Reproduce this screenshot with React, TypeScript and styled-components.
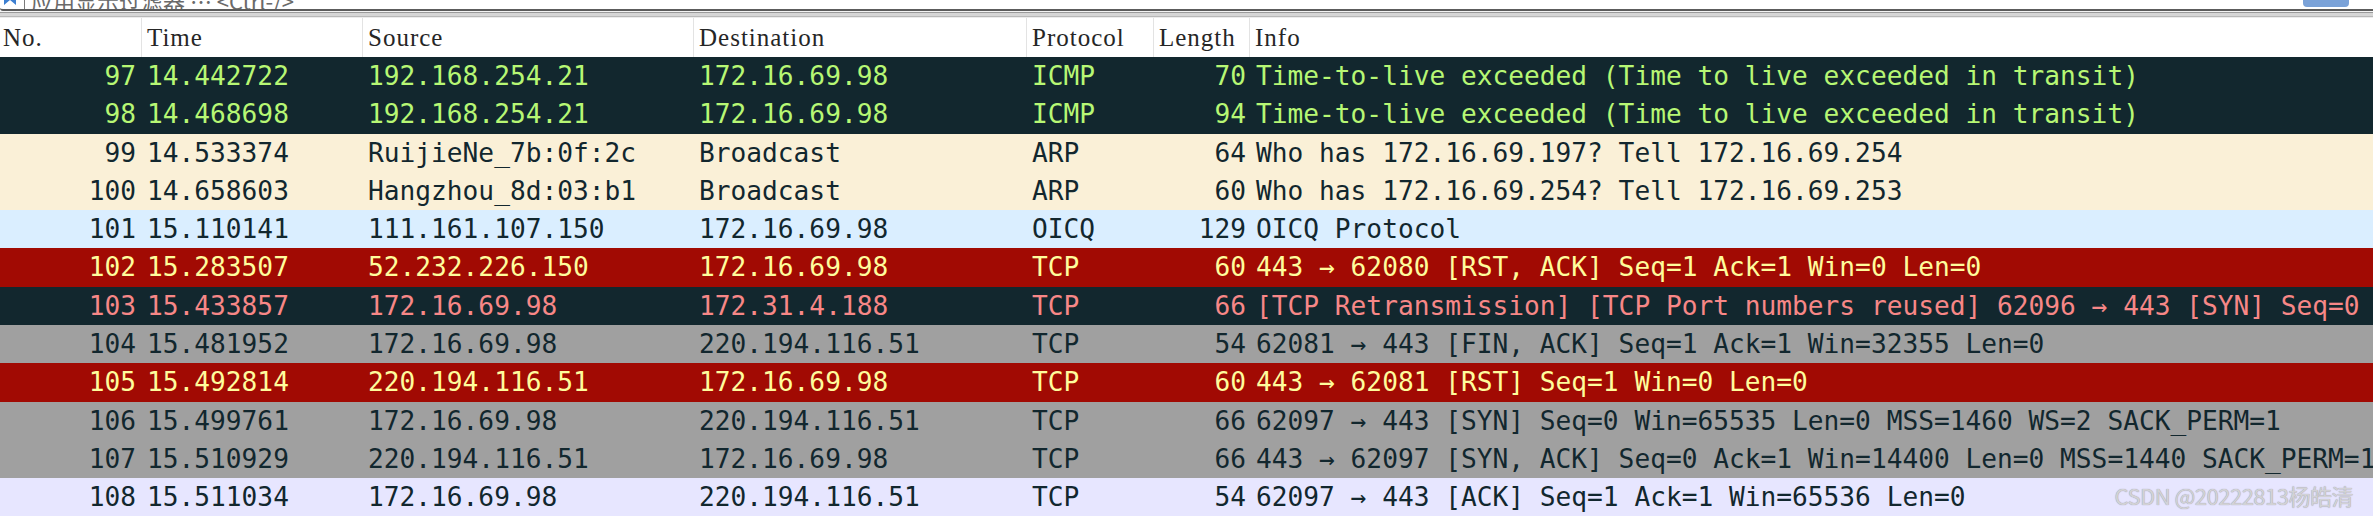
import React from "react";
import styled, { createGlobalStyle, css } from "styled-components";

const GlobalStyle = createGlobalStyle`
  html, body {
    margin: 0;
    padding: 0;
    background: #ffffff;
    overflow: hidden;
  }
  #root {
    width: 2373px;
    height: 516px;
  }
`;

const columns = css`
  display: grid;
  grid-template-columns: 141px 221px 331px 333px 127px 96px minmax(0, 1fr);
`;

const Window = styled.div`
  position: relative;
  width: 2373px;
  height: 516px;
  overflow: hidden;
  background: #ffffff;
  display: flex;
  flex-direction: column;
`;

const FilterBar = styled.div`
  height: 9px;
  flex: none;
  display: flex;
  align-items: flex-end;
  overflow: hidden;
  border-bottom: 2px solid #5c5c5c;
  border-bottom-left-radius: 3px;
  background: #ffffff;
`;

const FilterIcon = styled.div`
  width: 18px;
  height: 26px;
  flex: none;
  margin-left: 2px;
  display: flex;
  align-items: flex-end;
`;

const FilterDivider = styled.div`
  width: 1px;
  height: 26px;
  background: #7a7a7a;
  margin: 0 6px 0 4px;
  flex: none;
`;

const FilterText = styled.div`
  font-family: "Noto Sans CJK SC", sans-serif;
  font-size: 22px;
  line-height: 26px;
  height: 22px;
  color: #6a6a6a;
  white-space: nowrap;
  flex: 1;
`;

const FilterButton = styled.div`
  width: 46px;
  height: 24px;
  margin-right: 24px;
  margin-bottom: 2px;
  border-radius: 4px;
  background: #7aa2d8;
  flex: none;
`;

const Splitter = styled.div`
  height: 7px;
  flex: none;
  background: linear-gradient(
    to bottom,
    #f4f4f4 0px,
    #f4f4f4 1px,
    #9a9a9a 1px,
    #9a9a9a 2px,
    #d6d6d6 2px,
    #d6d6d6 5px,
    #b8b8b8 5px,
    #b8b8b8 6px,
    #ececec 6px
  );
`;

const Header = styled.div`
  ${columns};
  height: 39px;
  flex: none;
  background: #ffffff;
`;

const HeaderCell = styled.div`
  display: flex;
  align-items: center;
  padding-left: 5px;
  border-left: 1px solid #e3e3e3;
  font-family: "Liberation Serif", serif;
  font-size: 25px;
  letter-spacing: 1px;
  color: #262626;
  white-space: nowrap;
  overflow: hidden;

  &:first-child {
    border-left: none;
    padding-left: 3px;
  }
`;

const Rows = styled.div`
  display: flex;
  flex-direction: column;
`;

const Row = styled.div<{ $bg: string; $fg: string }>`
  ${columns};
  height: 38.3px;
  flex: none;
  background: ${(p) => p.$bg};
  color: ${(p) => p.$fg};
  font-family: "DejaVu Sans Mono", monospace;
  font-size: 26.2px;
  line-height: 38px;
`;

const Cell = styled.div<{ $right?: boolean; $pr?: number }>`
  padding-left: 6px;
  padding-right: ${(p) => (p.$pr !== undefined ? p.$pr : 4)}px;
  text-align: ${(p) => (p.$right ? "right" : "left")};
  white-space: nowrap;
  overflow: hidden;
`;

const InfoCell = styled.div`
  padding-left: 7px;
  white-space: nowrap;
  overflow: hidden;
`;

const Watermark = styled.div`
  position: absolute;
  top: 481px;
  right: 20px;
  font-family: "Noto Sans CJK SC", sans-serif;
  font-size: 22px;
  line-height: 28px;
  color: #d2d2d6;
  text-shadow: 0 0 1px #8c8c96;
  letter-spacing: -0.5px;
  white-space: nowrap;
`;

type Packet = {
  no: number;
  time: string;
  src: string;
  dst: string;
  proto: string;
  len: number;
  info: string;
  bg: string;
  fg: string;
};

const DARK = "#12272e";

const packets: Packet[] = [
  { no: 97, time: "14.442722", src: "192.168.254.21", dst: "172.16.69.98", proto: "ICMP", len: 70, info: "Time-to-live exceeded (Time to live exceeded in transit)", bg: DARK, fg: "#b7f774" },
  { no: 98, time: "14.468698", src: "192.168.254.21", dst: "172.16.69.98", proto: "ICMP", len: 94, info: "Time-to-live exceeded (Time to live exceeded in transit)", bg: DARK, fg: "#b7f774" },
  { no: 99, time: "14.533374", src: "RuijieNe_7b:0f:2c", dst: "Broadcast", proto: "ARP", len: 64, info: "Who has 172.16.69.197? Tell 172.16.69.254", bg: "#faf0d7", fg: DARK },
  { no: 100, time: "14.658603", src: "Hangzhou_8d:03:b1", dst: "Broadcast", proto: "ARP", len: 60, info: "Who has 172.16.69.254? Tell 172.16.69.253", bg: "#faf0d7", fg: DARK },
  { no: 101, time: "15.110141", src: "111.161.107.150", dst: "172.16.69.98", proto: "OICQ", len: 129, info: "OICQ Protocol", bg: "#daeeff", fg: DARK },
  { no: 102, time: "15.283507", src: "52.232.226.150", dst: "172.16.69.98", proto: "TCP", len: 60, info: "443 → 62080 [RST, ACK] Seq=1 Ack=1 Win=0 Len=0", bg: "#a10a03", fg: "#fffc9c" },
  { no: 103, time: "15.433857", src: "172.16.69.98", dst: "172.31.4.188", proto: "TCP", len: 66, info: "[TCP Retransmission] [TCP Port numbers reused] 62096 → 443 [SYN] Seq=0", bg: DARK, fg: "#f78787" },
  { no: 104, time: "15.481952", src: "172.16.69.98", dst: "220.194.116.51", proto: "TCP", len: 54, info: "62081 → 443 [FIN, ACK] Seq=1 Ack=1 Win=32355 Len=0", bg: "#a0a0a0", fg: DARK },
  { no: 105, time: "15.492814", src: "220.194.116.51", dst: "172.16.69.98", proto: "TCP", len: 60, info: "443 → 62081 [RST] Seq=1 Win=0 Len=0", bg: "#a10a03", fg: "#fffc9c" },
  { no: 106, time: "15.499761", src: "172.16.69.98", dst: "220.194.116.51", proto: "TCP", len: 66, info: "62097 → 443 [SYN] Seq=0 Win=65535 Len=0 MSS=1460 WS=2 SACK_PERM=1", bg: "#a0a0a0", fg: DARK },
  { no: 107, time: "15.510929", src: "220.194.116.51", dst: "172.16.69.98", proto: "TCP", len: 66, info: "443 → 62097 [SYN, ACK] Seq=0 Ack=1 Win=14400 Len=0 MSS=1440 SACK_PERM=1", bg: "#a0a0a0", fg: DARK },
  { no: 108, time: "15.511034", src: "172.16.69.98", dst: "220.194.116.51", proto: "TCP", len: 54, info: "62097 → 443 [ACK] Seq=1 Ack=1 Win=65536 Len=0", bg: "#e7e6ff", fg: DARK },
];

const headers = ["No.", "Time", "Source", "Destination", "Protocol", "Length", "Info"];

export default function App() {
  return (
    <Window>
      <GlobalStyle />
      <FilterBar>
        <FilterIcon>
          <svg width="18" height="26" viewBox="0 0 18 26">
            <path d="M2 2 H14 V22 L8 17 L2 22 Z" fill="#3d7fd1" />
          </svg>
        </FilterIcon>
        <FilterDivider />
        <FilterText>应用显示过滤器 … &lt;Ctrl-/&gt;</FilterText>
        <FilterButton />
      </FilterBar>
      <Splitter />
      <Header>
        {headers.map((h) => (
          <HeaderCell key={h}>{h}</HeaderCell>
        ))}
      </Header>
      <Rows>
        {packets.map((p) => (
          <Row key={p.no} $bg={p.bg} $fg={p.fg}>
            <Cell $right $pr={5}>{p.no}</Cell>
            <Cell>{p.time}</Cell>
            <Cell>{p.src}</Cell>
            <Cell>{p.dst}</Cell>
            <Cell>{p.proto}</Cell>
            <Cell $right $pr={3}>{p.len}</Cell>
            <InfoCell>{p.info}</InfoCell>
          </Row>
        ))}
      </Rows>
      <Watermark>CSDN @20222813杨皓清</Watermark>
    </Window>
  );
}
